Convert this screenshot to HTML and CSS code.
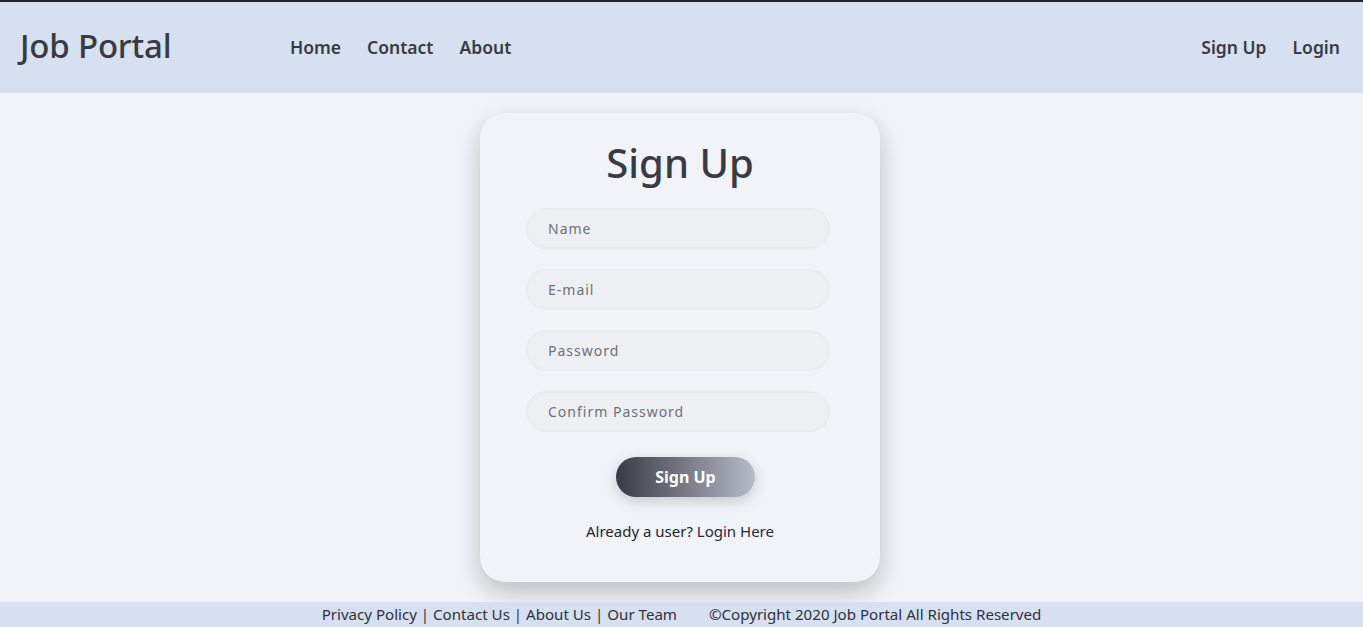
FILE: index.html
```html
<!DOCTYPE html>
<html>
<head>
<meta charset="utf-8">
<link rel="stylesheet" href="styles.css">
</head>
<body>
<header class="topbar">
  <div class="brand">Job Portal</div>
  <nav class="nav-main">
    <a href="#">Home</a>
    <a href="#">Contact</a>
    <a href="#">About</a>
  </nav>
  <nav class="nav-auth">
    <a href="#">Sign Up</a>
    <a href="#">Login</a>
  </nav>
</header>
<main class="content">
  <form class="card">
    <h1 class="card-title">Sign Up</h1>
    <input class="field" type="text" placeholder="Name">
    <input class="field" type="email" placeholder="E-mail">
    <input class="field" type="password" placeholder="Password">
    <input class="field" type="password" placeholder="Confirm Password">
    <button class="btn" type="button">Sign Up</button>
    <p class="already">Already a user? <a href="#">Login Here</a></p>
  </form>
</main>
<footer class="footer">
  <span class="links"><a href="#">Privacy Policy</a> | <a href="#">Contact Us</a> | <a href="#">About Us</a> | <a href="#">Our Team</a></span>
  <span class="copy">©Copyright 2020 Job Portal All Rights Reserved</span>
</footer>
</body>
</html>
```
FILE: styles.css
```css
* { box-sizing: border-box; }
html, body { height: 100%; }
body {
  margin: 0;
  background: #f1f3f8;
  font-family: "Noto Sans", "Open Sans", sans-serif;
  color: #393b44;
  border-top: 2px solid #24252a;
  overflow: hidden;
}
a { color: inherit; text-decoration: none; }
.topbar {
  height: 91px;
  background: #d6e0f0;
  display: flex;
  align-items: center;
  padding: 0 22px 2px 20px;
}
.brand {
  font-size: 33px;
  font-weight: 500;
  width: 270px;
  letter-spacing: -0.2px;
  padding-bottom: 2px;
}
.nav-main, .nav-auth {
  display: flex;
  gap: 26px;
  font-size: 17.5px;
  font-weight: 600;
}
.nav-auth { margin-right: 1px; }
.nav-main { flex: 1; }
.content {
  display: flex;
  justify-content: center;
  padding-top: 20px;
}
.card {
  width: 400px;
  height: 469px;
  margin-right: 3px;
  background: #f1f3f8;
  border-radius: 25px;
  box-shadow: 0 10px 25px rgba(0,0,0,0.22);
  display: flex;
  flex-direction: column;
  align-items: center;
  padding-top: 25px;
}
.card-title {
  margin: 0 0 20px;
  font-size: 40px;
  font-weight: 500;
  line-height: 50px;
}
.field {
  width: 304px;
  height: 41px;
  border-radius: 21px;
  border: 2px solid #eaebef;
  background: #eeeff3;
  padding: 0 20px;
  margin: 0 4px 20px 0;
  font-family: inherit;
  font-size: 14px;
  letter-spacing: 1px;
  outline: none;
}
.field::placeholder { color: #6e7077; }
.btn {
  margin: 5px 0 0 11px;
  width: 139px;
  height: 40px;
  border: none;
  border-radius: 20px;
  background: linear-gradient(90deg, #393b44 0%, #b7bac8 100%);
  color: #fff;
  font-family: inherit;
  font-size: 16px;
  font-weight: 700;
  box-shadow: 0 4px 14px rgba(0,0,0,0.18);
}
.already {
  margin: 24px 0 0;
  font-size: 15px;
  color: #24252a;
}
.already a { color: #1f2a44; }
.footer {
  position: fixed;
  left: 0; right: 0; bottom: 0;
  height: 25px;
  background: #d6e0f0;
  display: flex;
  justify-content: center;
  align-items: center;
  gap: 32px;
  font-size: 15.1px;
  color: #2f3140;
  padding-bottom: 2px;
}
```
